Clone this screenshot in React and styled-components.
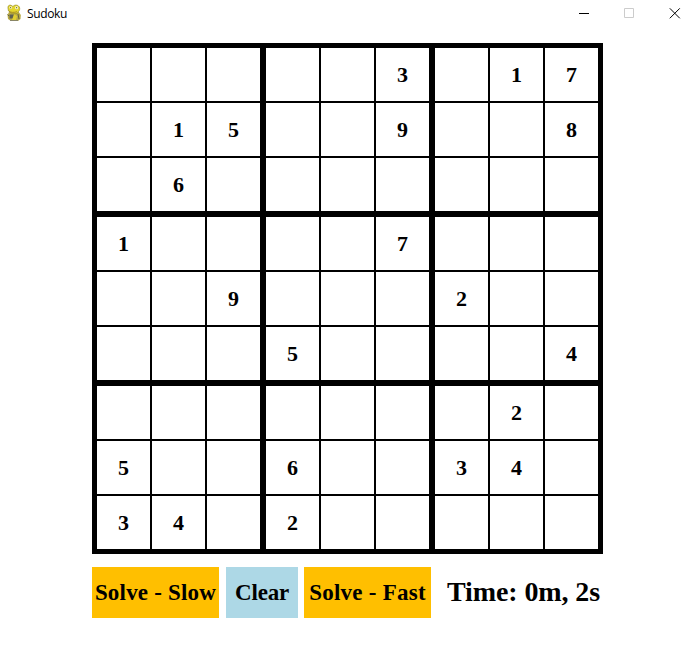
import React from "react";
import styled, { createGlobalStyle } from "styled-components";

const GlobalStyle = createGlobalStyle`
  * { box-sizing: border-box; }
  body { margin: 0; background: #fff; color: #000; overflow: hidden; }
`;

const Window = styled.div`
  width: 698px;
  height: 652px;
  display: flex;
  flex-direction: column;
  background: #fff;
`;

const TitleBar = styled.header`
  height: 28px;
  display: flex;
  align-items: center;
  padding: 0 17px 2px 6px;
`;

const Title = styled.h1`
  flex: 1;
  margin: 1px 0 0 5px;
  font: 400 12px/16px "Open Sans", sans-serif;
  letter-spacing: -0.35px;
`;

const Controls = styled.div`
  display: flex;
  gap: 34px;
`;

const ControlButton = styled.button`
  width: 12px;
  height: 12px;
  padding: 0;
  border: 0;
  background: none;
  display: flex;
`;

const Main = styled.main`
  width: 511px;
  margin: 15px 0 0 92px;
`;

const Board = styled.div`
  display: grid;
  grid-template-columns: repeat(3, 163px);
  gap: 6px;
  padding: 5px;
  background: #000;
`;

const Block = styled.div`
  display: grid;
  grid-template-columns: repeat(3, 53px);
  grid-auto-rows: 53px;
  gap: 2px;
`;

const Cell = styled.div`
  display: flex;
  justify-content: center;
  align-items: center;
  background: #fff;
  padding-top: 1px;
  font: 700 22px/24px "Liberation Serif", serif;
`;

const Footer = styled.footer`
  display: flex;
  margin-top: 13px;
`;

const ActionButton = styled.button`
  width: ${(p) => p.$width}px;
  height: 51px;
  margin: 0 ${(p) => p.$gap}px 0 0;
  padding: 1px 0 0;
  border: 0;
  background: ${(p) => p.$color};
  color: #000;
  font: 700 23px/28px "Liberation Serif", serif;
  letter-spacing: ${(p) => p.$spacing}px;
  white-space: nowrap;
`;

const Timer = styled.div`
  margin: 9px 0 0 10px;
  font: 700 28px/32px "Liberation Serif", serif;
  letter-spacing: -0.1px;
  white-space: nowrap;
`;

const puzzle = [
  "     3 17",
  " 15  9  8",
  " 6       ",
  "1    7   ",
  "  9   2  ",
  "   5    4",
  "       2 ",
  "5  6  34 ",
  "34 2     ",
];

const blocks = Array.from({ length: 9 }, (_, b) =>
  Array.from({ length: 9 }, (_, c) => {
    const row = Math.floor(b / 3) * 3 + Math.floor(c / 3);
    const col = (b % 3) * 3 + (c % 3);
    return puzzle[row][col].trim();
  })
);

function SnakeIcon() {
  return (
    <svg width="16" height="18" viewBox="0 0 16 18">
      <path d="M3 8 1.5 11 2 15l3 2h7l2.5-2 .3-4-2-3z" fill="#b9aa45" />
      <path d="M2 4.5C1.5 2 3 .8 5 1.2L7 2.5C8 .8 11 .5 12.5 2c1.5 1 1.5 3 .8 4.5L11 9.5 5.5 9 2.5 7z" fill="#e3d52e" stroke="#8e8424" strokeWidth=".6" />
      <circle cx="4.7" cy="3.6" r="1.4" fill="#f5f2c5" />
      <circle cx="10.6" cy="3.7" r="1.6" fill="#f5f2c5" />
      <path d="M4.6 3.2v1M10.6 3.2v1" stroke="#55501f" />
      <path d="M3 7.2c2 1.5 5 1.5 8 .5" fill="none" stroke="#a58a24" strokeWidth=".9" />
      <path d="M3.5 10.5h5v4h-5z" fill="#5d6052" />
      <path d="m8 10 3 2-1 4H6" fill="#e0ce31" />
      <path d="M1.5 10.5 3 12m9-2 1 5" stroke="#65623c" />
      <path d="M4 16.5h8" stroke="#898566" />
    </svg>
  );
}

const controls = [
  { label: "Minimize", path: "M2 6.5h10", color: "#000" },
  { label: "Maximize", path: "M1.5 1.5h9v9h-9z", color: "#ccc" },
  { label: "Close", path: "m.8 1.3 10 10m0-10-10 10", color: "#000" },
];

const actions = [
  { label: "Solve - Slow", width: 127, gap: 7, color: "#ffbf00", spacing: 0.2 },
  { label: "Clear", width: 72, gap: 6, color: "#add8e6", spacing: -0.2 },
  { label: "Solve - Fast", width: 127, gap: 6, color: "#ffbf00", spacing: 0.25 },
];

export default function App() {
  return (
    <Window>
      <GlobalStyle />
      <TitleBar>
        <SnakeIcon />
        <Title>Sudoku</Title>
        <Controls>
          {controls.map((c) => (
            <ControlButton key={c.label} aria-label={c.label}>
              <svg width="12" height="12" viewBox="0 0 12 12">
                <path d={c.path} fill="none" stroke={c.color} />
              </svg>
            </ControlButton>
          ))}
        </Controls>
      </TitleBar>
      <Main>
        <Board>
          {blocks.map((cells, b) => (
            <Block key={b}>
              {cells.map((n, c) => (
                <Cell key={c}>{n}</Cell>
              ))}
            </Block>
          ))}
        </Board>
        <Footer>
          {actions.map((a) => (
            <ActionButton key={a.label} $width={a.width} $gap={a.gap} $color={a.color} $spacing={a.spacing}>
              {a.label}
            </ActionButton>
          ))}
          <Timer>Time: 0m, 2s</Timer>
        </Footer>
      </Main>
    </Window>
  );
}
